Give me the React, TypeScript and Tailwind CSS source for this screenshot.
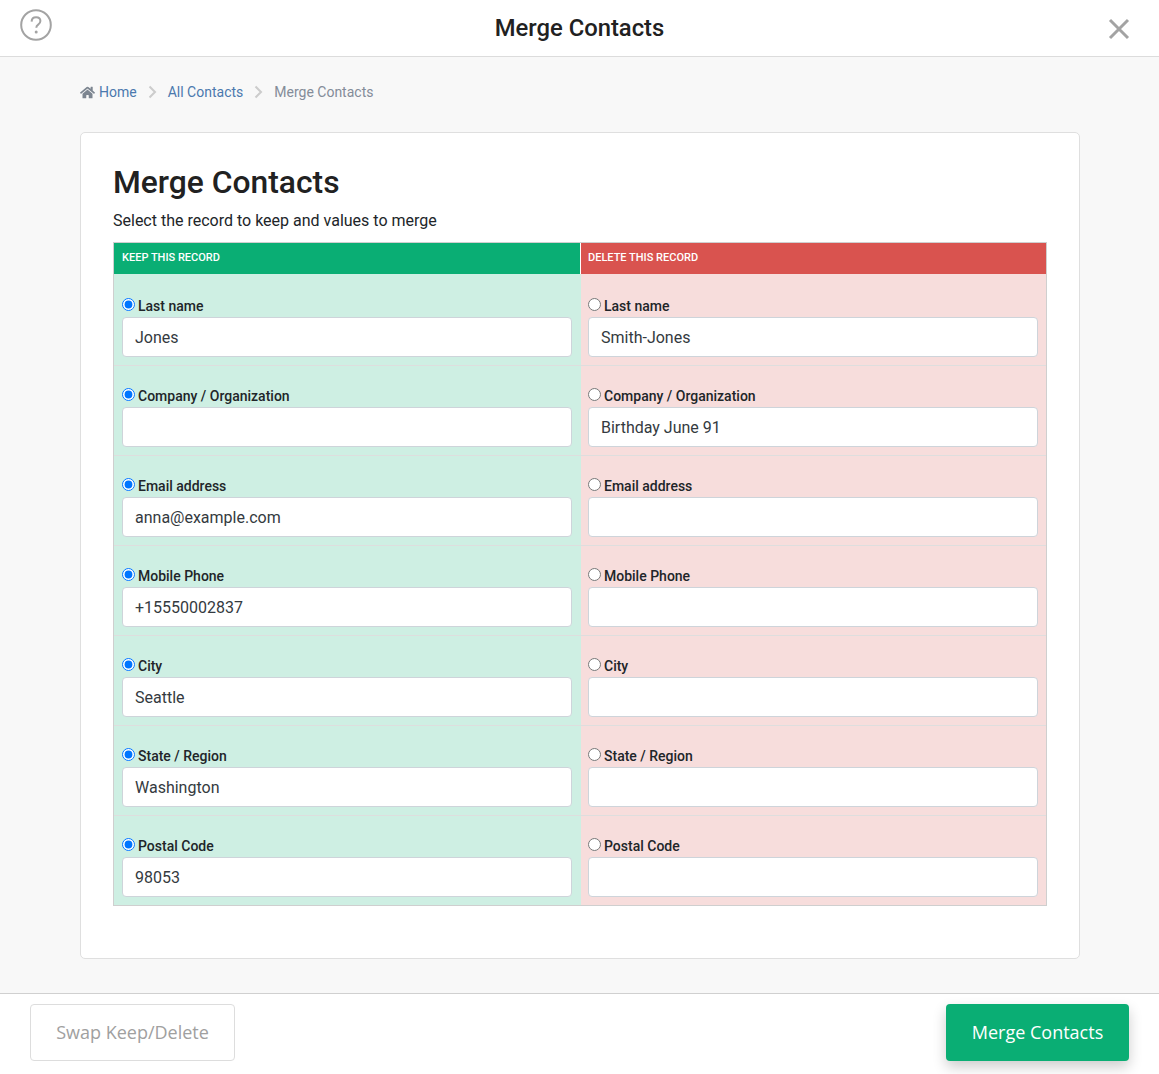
import { FaHome } from "react-icons/fa";

const fields = [
  { label: "Last name", keep: "Jones", del: "Smith-Jones" },
  { label: "Company / Organization", keep: "", del: "Birthday June 91" },
  { label: "Email address", keep: "anna@example.com", del: "" },
  { label: "Mobile Phone", keep: "+15550002837", del: "" },
  { label: "City", keep: "Seattle", del: "" },
  { label: "State / Region", keep: "Washington", del: "" },
  { label: "Postal Code", keep: "98053", del: "" },
];

function Chevron() {
  return (
    <svg width="9" height="14" viewBox="0 0 9 14" fill="none" className="mx-[11px]">
      <path d="M1.5 1.5 7 7l-5.5 5.5" stroke="#cccccc" strokeWidth="2" />
    </svg>
  );
}

function Cell(props: { name: string; label: string; value: string; checked: boolean; last: boolean; right?: boolean }) {
  return (
    <div
      className={
        "pt-[21px] " +
        (props.right ? "pl-[7px] " : "pl-[8px] ") +
        (props.last ? "h-[89px]" : "h-[90px] border-b border-[#dedede]")
      }
    >
      <label className="flex h-[19px] items-center text-[14px] font-medium leading-[19px] text-[#212529]">
        <input
          type="radio"
          name={props.name}
          defaultChecked={props.checked}
          className="m-0 mr-[3px] mb-[4px] h-[13px] w-[13px]"
        />
        {props.label}
      </label>
      <input
        readOnly
        value={props.value}
        className="mt-[1px] block h-[40px] w-[450px] rounded-[4px] border border-[#ced4da] bg-white px-[12px] text-[16px] text-[#343a40] outline-none"
      />
    </div>
  );
}

export default function App() {
  return (
    <div className="flex h-[1074px] flex-col bg-[#f8f8f8] font-['Roboto',sans-serif] text-[#212529]">
      <header className="relative flex h-[57px] shrink-0 items-center justify-center border-b border-[#dcdcdc] bg-white">
        <svg width="32" height="32" viewBox="0 0 32 32" fill="none" className="absolute left-[20px] top-[9px]">
          <circle cx="16" cy="16" r="14.8" stroke="#a3a3a3" strokeWidth="2" />
          <path
            d="M11.6 12.6c.1-2.7 2-4.3 4.5-4.3 2.4 0 4.3 1.5 4.3 3.8 0 1.7-.9 2.6-2.2 3.5-1.3.9-1.9 1.6-1.9 3.2"
            stroke="#a3a3a3"
            strokeWidth="2"
          />
          <circle cx="16.2" cy="23" r="1.5" fill="#a3a3a3" />
        </svg>
        <h1 className="mt-[2px] text-[23.8px] font-medium leading-none text-[#212121]">Merge Contacts</h1>
        <svg width="22" height="22" viewBox="0 0 22 22" fill="none" className="absolute left-[1108px] top-[18px]">
          <path d="M2 2l18 18M20 2 2 20" stroke="#a3a3a3" strokeWidth="3" />
        </svg>
      </header>

      <main className="flex-1 pl-[80px]">
        <nav className="flex h-[75px] items-center pb-[5px] text-[14px]">
          <FaHome size={15} className="mr-[4px] text-[#7c8590]" />
          <span className="text-[#4b79ae]">Home</span>
          <Chevron />
          <span className="text-[#4b79ae]">All Contacts</span>
          <Chevron />
          <span className="text-[#848c99]">Merge Contacts</span>
        </nav>

        <section className="h-[827px] w-[1000px] rounded-[5px] border border-[#dfdfdf] bg-white px-[32px] pt-[27px]">
          <h2 className="text-[31.8px] font-medium leading-[44px] text-[#212121]">Merge Contacts</h2>
          <p className="mt-[5px] h-[33px] text-[16px] leading-[24px] text-[#212529]">
            Select the record to keep and values to merge
          </p>
          <div className="grid w-[934px] grid-cols-[467px_465px] border border-[#cfcfcf] bg-white">
            <div className="flex h-[31px] items-center border-r border-white bg-[#0aae74] pl-[8px] text-[11px] font-medium text-white">
              KEEP THIS RECORD
            </div>
            <div className="flex h-[31px] items-center bg-[#d9534f] pl-[7px] text-[11px] font-medium text-white">
              DELETE THIS RECORD
            </div>
            <div className="bg-[#ceefe3] pt-[2px]">
              {fields.map((f, i) => (
                <Cell
                  key={f.label}
                  name={"field" + i}
                  label={f.label}
                  value={f.keep}
                  checked
                  last={i === fields.length - 1}
                />
              ))}
            </div>
            <div className="bg-[#f7dddc] pt-[2px]">
              {fields.map((f, i) => (
                <Cell
                  key={f.label}
                  name={"field" + i}
                  label={f.label}
                  value={f.del}
                  checked={false}
                  last={i === fields.length - 1}
                  right
                />
              ))}
            </div>
          </div>
        </section>
      </main>

      <footer className="flex h-[81px] shrink-0 items-start justify-between border-t border-[#d0d0d0] bg-white px-[30px] pt-[10px] font-['Open_Sans',sans-serif] text-[18px]">
        <button className="h-[57px] w-[205px] rounded-[4px] border border-[#dddddd] bg-white text-[#a0a0a0]">
          Swap Keep/Delete
        </button>
        <button className="h-[57px] w-[183px] rounded-[4px] bg-[#0aae74] text-white shadow-[0_6px_14px_rgba(0,0,0,0.2)]">
          Merge Contacts
        </button>
      </footer>
    </div>
  );
}
